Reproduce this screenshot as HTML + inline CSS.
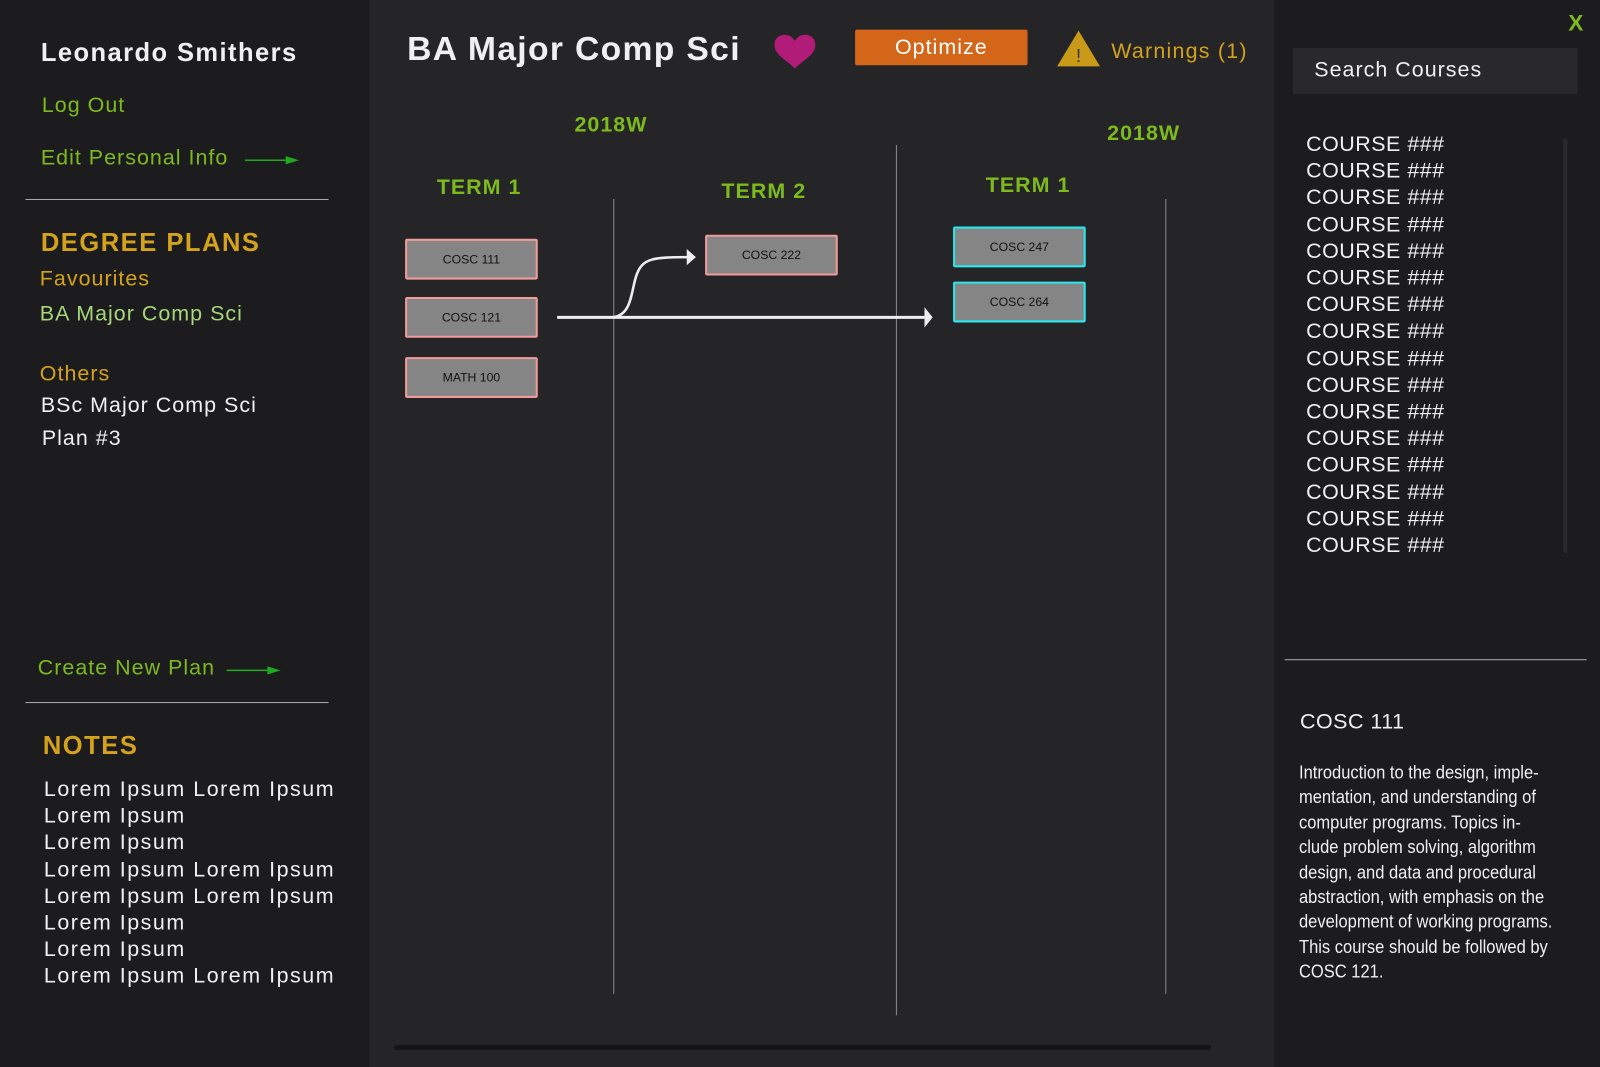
<!DOCTYPE html>
<html><head><meta charset="utf-8"><style>
html,body{margin:0;padding:0;width:1600px;height:1067px;overflow:hidden;background:#1c1c1e;font-family:"Liberation Sans",sans-serif}
#w{position:absolute;left:0;top:0;width:1568px;height:1046px;transform:scale(1.020408);transform-origin:0 0}
.a{position:absolute;white-space:nowrap}
.l{left:0;top:0;width:362px;height:1046px;background:#1c1c1e}
.c{left:362px;top:0;width:887px;height:1046px;background:#252427}
.r{left:1249px;top:0;width:319px;height:1046px;background:#1c1c1e}
.g{color:#7dba1e}.y{color:#d4a21c}.wh{color:#f0f0f0}
.box{position:absolute;width:126px;height:36px;background:#858585;border:2px solid #f29b9b;border-radius:2px;font-size:12px;color:#111;text-align:center;line-height:36px}
.cy{border-color:#28e8f0}
.vl{position:absolute;width:1px;background:#8a8a8a}
.t{font-weight:bold;font-size:21px;color:#7dba1e;letter-spacing:1px}
.crs{font-size:21px;color:#f0f0f0;line-height:26.2px;letter-spacing:.5px}
.n{font-size:21px;color:#f0f0f0;line-height:26.2px;letter-spacing:1.5px}
</style></head><body><div id="w">
<div class="a l"></div><div class="a c"></div><div class="a r"></div>

<div class="a wh" style="left:40px;top:38px;font-size:25px;font-weight:bold;letter-spacing:1.4px">Leonardo Smithers</div>
<div class="a g" style="left:41px;top:92px;font-size:21px;letter-spacing:1px">Log Out</div>
<div class="a g" style="left:40px;top:143px;font-size:21px;letter-spacing:1px">Edit Personal Info</div>
<svg class="a" style="left:238px;top:151px" width="56" height="12"><line x1="2" y1="6" x2="46" y2="6" stroke="#1faa1f" stroke-width="1.5"/><path d="M42 2 L55 6 L42 10 Z" fill="#1faa1f"/></svg>
<div class="a" style="left:25px;top:195px;width:297px;height:1px;background:#aaa"></div>
<div class="a y" style="left:40px;top:224px;font-size:25px;font-weight:bold;letter-spacing:1.5px">DEGREE PLANS</div>
<div class="a y" style="left:39px;top:262px;font-size:21px;letter-spacing:1px">Favourites</div>
<div class="a" style="left:39px;top:296px;font-size:21px;letter-spacing:1px;color:#a6d77a">BA Major Comp Sci</div>
<div class="a y" style="left:39px;top:355px;font-size:21px;letter-spacing:1px">Others</div>
<div class="a wh" style="left:40px;top:386px;font-size:21px;letter-spacing:1px">BSc Major Comp Sci</div>
<div class="a wh" style="left:41px;top:418px;font-size:21px;letter-spacing:1px">Plan #3</div>
<div class="a g" style="left:37px;top:643px;font-size:21px;letter-spacing:1px">Create New Plan</div>
<svg class="a" style="left:220px;top:651px" width="56" height="12"><line x1="2" y1="6" x2="46" y2="6" stroke="#1faa1f" stroke-width="1.5"/><path d="M42 2 L55 6 L42 10 Z" fill="#1faa1f"/></svg>
<div class="a" style="left:25px;top:688px;width:297px;height:1px;background:#aaa"></div>
<div class="a y" style="left:42px;top:717px;font-size:25px;font-weight:bold;letter-spacing:1.5px">NOTES</div>
<div class="a n" style="left:43px;top:761px">Lorem Ipsum Lorem Ipsum<br>Lorem Ipsum<br>Lorem Ipsum<br>Lorem Ipsum Lorem Ipsum<br>Lorem Ipsum Lorem Ipsum<br>Lorem Ipsum<br>Lorem Ipsum<br>Lorem Ipsum Lorem Ipsum</div>

<div class="a wh" style="left:399px;top:29px;font-size:33px;font-weight:bold;letter-spacing:1.3px">BA Major Comp Sci</div>
<svg class="a" style="left:757px;top:32px" width="44" height="36" viewBox="0 0 44 36"><path d="M22 35 C14 27 2 22 2 12 C2 5 7 2 12 2 C17 2 20 5 22 8 C24 5 27 2 32 2 C37 2 42 5 42 12 C42 22 30 27 22 35 Z" fill="#b01c78"/></svg>
<div class="a" style="left:838px;top:29px;width:169px;height:35px;background:#d4661a;border-radius:2px;color:#fff;font-size:21px;text-align:center;line-height:35px;letter-spacing:1px">Optimize</div>
<svg class="a" style="left:1035px;top:29px" width="44" height="37" viewBox="0 0 44 37"><path d="M22 1 L43 36 L1 36 Z" fill="#c99a18"/><text x="22" y="32" text-anchor="middle" font-size="18" fill="#333" font-family="Liberation Sans">!</text></svg>
<div class="a y" style="left:1089px;top:39px;font-size:21px;letter-spacing:1.2px">Warnings (1)</div>

<div class="a t" style="left:563px;top:111px">2018W</div>
<div class="a t" style="left:1085px;top:119px">2018W</div>
<div class="a t" style="left:428px;top:172px">TERM 1</div>
<div class="a t" style="left:707px;top:176px">TERM 2</div>
<div class="a t" style="left:966px;top:170px">TERM 1</div>
<div class="vl" style="left:601px;top:195px;height:779px"></div>
<div class="vl" style="left:878px;top:142px;height:853px"></div>
<div class="vl" style="left:1142px;top:195px;height:779px"></div>

<div class="box" style="left:397px;top:234px">COSC 111</div>
<div class="box" style="left:397px;top:291px">COSC 121</div>
<div class="box" style="left:397px;top:350px">MATH 100</div>
<div class="box" style="left:691px;top:230px">COSC 222</div>
<div class="box cy" style="left:934px;top:222px">COSC 247</div>
<div class="box cy" style="left:934px;top:276px">COSC 264</div>
<svg class="a" style="left:540px;top:235px" width="380" height="90"><path d="M6 76 L368 76" stroke="#eee" stroke-width="3" fill="none"/><path d="M366 66 L374 76 L366 86 Z" fill="#eee"/><path d="M58 76 C80 76 78 50 84 34 C90 18 100 17 135 17" stroke="#eee" stroke-width="2.5" fill="none"/><path d="M133 9 L142 17 L133 25 Z" fill="#eee"/></svg>
<div class="a" style="left:386px;top:1024px;width:801px;height:5px;background:#151515;border-radius:3px"></div>

<div class="a" style="left:1537px;top:10px;font-size:22px;font-weight:bold;color:#7dba1e">X</div>
<div class="a" style="left:1267px;top:47px;width:279px;height:45px;background:#29282b"></div>
<div class="a wh" style="left:1288px;top:57px;font-size:21px;letter-spacing:1px">Search Courses</div>
<div class="a crs" style="left:1280px;top:129px">COURSE ###<br>COURSE ###<br>COURSE ###<br>COURSE ###<br>COURSE ###<br>COURSE ###<br>COURSE ###<br>COURSE ###<br>COURSE ###<br>COURSE ###<br>COURSE ###<br>COURSE ###<br>COURSE ###<br>COURSE ###<br>COURSE ###<br>COURSE ###</div>
<div class="a" style="left:1532px;top:136px;width:4px;height:406px;background:#2a2a2c;border-radius:2px"></div>
<div class="a" style="left:1259px;top:646px;width:296px;height:1px;background:#aaa"></div>
<div class="a wh" style="left:1274px;top:696px;font-size:21px;letter-spacing:.5px">COSC 111</div>
<div class="a" style="left:1273px;top:745px;white-space:normal;font-size:18.5px;line-height:24.4px;color:#f0f0f0;transform:scaleX(.875);transform-origin:0 0;width:320px">Introduction to the design, imple-<br>mentation, and understanding of<br>computer programs. Topics in-<br>clude problem solving, algorithm<br>design, and data and procedural<br>abstraction, with emphasis on the<br>development of working programs.<br>This course should be followed by<br>COSC 121.</div>
</div></body></html>
